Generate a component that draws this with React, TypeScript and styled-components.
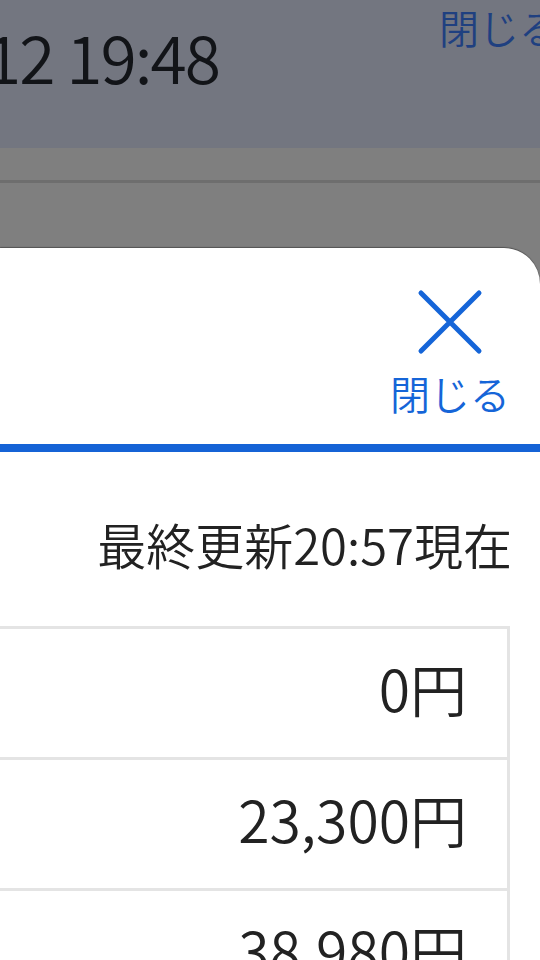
import React from "react";
import styled, { createGlobalStyle } from "styled-components";

const GlobalStyle = createGlobalStyle`
  html, body {
    margin: 0;
    padding: 0;
    width: 540px;
    height: 960px;
    overflow: hidden;
    background: #7f7f7f;
  }
  body {
    font-family: "Noto Sans CJK JP", "Noto Sans", sans-serif;
    font-weight: 350;
  }
  * { box-sizing: border-box; }
`;

const Page = styled.div`
  width: 540px;
  height: 960px;
  display: flex;
  flex-direction: column;
  overflow: hidden;
  background: #7f7f7f;
`;

const TopBar = styled.div`
  height: 148px;
  flex: none;
  background: #737680;
  display: flex;
  justify-content: space-between;
  align-items: flex-start;
  overflow: hidden;
`;

const DateText = styled.div`
  margin-left: -15px;
  margin-top: 16px;
  font-size: 66px;
  letter-spacing: -2px;
  line-height: 1.2;
  color: #121418;
  white-space: nowrap;
`;

const TopClose = styled.div`
  margin-top: -1px;
  margin-right: -19px;
  font-size: 40px;
  line-height: 1.4;
  color: #1f4080;
  white-space: nowrap;
`;

const Band = styled.div<{ h: number; dark?: boolean }>`
  height: ${(p) => p.h}px;
  flex: none;
  background: ${(p) => (p.dark ? "#6e6e6e" : "#7f7f7f")};
`;

const Sheet = styled.div`
  flex: 1;
  background: #ffffff;
  border-top-right-radius: 36px;
  box-shadow: 0 -1px 1px rgba(0, 0, 0, 0.35);
  display: flex;
  flex-direction: column;
  overflow: hidden;
`;

const SheetHeader = styled.div`
  height: 196px;
  flex: none;
  display: flex;
  justify-content: flex-end;
  align-items: flex-start;
  padding-right: 30px;
`;

const CloseButton = styled.button`
  border: 0;
  background: none;
  padding: 0;
  margin-top: 41px;
  display: flex;
  flex-direction: column;
  align-items: center;
  color: #1565d8;
  font-family: inherit;
  font-weight: inherit;
  cursor: pointer;
`;

const CloseLabel = styled.span`
  font-size: 40px;
  line-height: 1;
  margin-top: 18px;
  white-space: nowrap;
`;

const BlueLine = styled.div`
  height: 8px;
  flex: none;
  background: #1563d6;
`;

const Body = styled.div`
  display: flex;
  flex-direction: column;
  align-items: flex-end;
  padding-right: 28px;
`;

const Updated = styled.div`
  margin-top: 63px;
  font-size: 49px;
  line-height: 1.2;
  color: #222222;
  white-space: nowrap;
`;

const Table = styled.div`
  margin-top: 52px;
  align-self: stretch;
  margin-left: -20px;
  margin-right: 2px;
  border-top: 3px solid #e4e4e4;
  border-right: 3px solid #e4e4e4;
  display: flex;
  flex-direction: column;
`;

const Row = styled.div`
  height: 131px;
  border-bottom: 3px solid #e4e4e4;
  display: flex;
  align-items: center;
  justify-content: flex-end;
  padding-right: 40px;
  padding-bottom: 10px;
`;

const Amount = styled.span`
  font-size: 57px;
  line-height: 1;
  color: #222222;
  white-space: nowrap;
`;

const CloseIcon = () => (
  <svg width="66" height="66" viewBox="0 0 66 66" fill="none">
    <path
      d="M4 4 L62 62 M62 4 L4 62"
      stroke="currentColor"
      strokeWidth="5"
      strokeLinecap="round"
    />
  </svg>
);

const amounts = ["0円", "23,300円", "38,980円"];

export default function App() {
  return (
    <>
      <GlobalStyle />
      <Page>
        <TopBar>
          <DateText>12 19:48</DateText>
          <TopClose>閉じる</TopClose>
        </TopBar>
        <Band h={32} />
        <Band h={3} dark />
        <Band h={65} />
        <Sheet>
          <SheetHeader>
            <CloseButton>
              <CloseIcon />
              <CloseLabel>閉じる</CloseLabel>
            </CloseButton>
          </SheetHeader>
          <BlueLine />
          <Body>
            <Updated>最終更新20:57現在</Updated>
            <Table>
              {amounts.map((a) => (
                <Row key={a}>
                  <Amount>{a}</Amount>
                </Row>
              ))}
            </Table>
          </Body>
        </Sheet>
      </Page>
    </>
  );
}
